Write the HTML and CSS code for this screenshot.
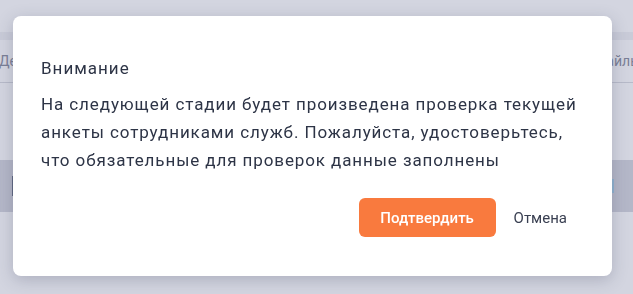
FILE: index.html
```html
<!DOCTYPE html>
<html lang="ru">
<head>
<meta charset="utf-8">
<link rel="stylesheet" href="styles.css">
</head>
<body>
<div class="page">
  <div class="band"></div>
  <div class="thead">
    <span class="th-left">Дело</span>
    <span class="th-right">Файлы</span>
  </div>
  <div class="spacer"></div>
  <div class="row-dark">
    <span class="mark-left"></span>
    <span class="mark-right"></span>
  </div>
</div>
<div class="modal" role="dialog">
  <div class="modal-title">Внимание</div>
  <p class="modal-text">На следующей стадии будет произведена проверка текущей анкеты сотрудниками служб. Пожалуйста, удостоверьтесь, что обязательные для проверок данные заполнены</p>
  <div class="modal-actions">
    <button class="btn btn-primary">Подтвердить</button>
    <button class="btn btn-link">Отмена</button>
  </div>
</div>
</body>
</html>
```
FILE: styles.css
```css
* { box-sizing: border-box; }
html, body { margin: 0; padding: 0; }
body {
  width: 633px;
  height: 294px;
  overflow: hidden;
  background: #d3d5e0;
  font-family: Roboto, "Liberation Sans", sans-serif;
  color: #2d3446;
}
.page {
  display: flex;
  flex-direction: column;
  padding-top: 32px;
}
.band {
  height: 8px;
  background: #c9cbd8;
}
.thead {
  height: 43px;
  display: flex;
  justify-content: space-between;
  align-items: center;
  border-bottom: 1px solid #b7bac9;
  font-size: 14px;
  color: #7a7f96;
  margin: 0 -8px 0 -1px;
}
.spacer { height: 77px; }
.row-dark {
  height: 52px;
  background: #b4b7c8;
  display: flex;
  justify-content: space-between;
  align-items: center;
}
.mark-left {
  width: 2px;
  height: 20px;
  margin-left: 12px;
  background: #5f6882;
}
.mark-right {
  width: 2px;
  height: 14px;
  margin-right: 19px;
  background: #8fb2d0;
}
.modal {
  position: fixed;
  left: 13px;
  top: 16px;
  width: 599px;
  height: 260px;
  background: #fff;
  border-radius: 8px;
  box-shadow: 0 4px 16px rgba(60, 64, 90, 0.25);
  padding: 42px 20px 0 28px;
  display: flex;
  flex-direction: column;
}
.modal-title {
  font-size: 17px;
  line-height: 20px;
  letter-spacing: 1px;
  color: #2d3446;
}
.modal-text {
  margin: 12px 0 0;
  font-size: 17px;
  line-height: 28px;
  letter-spacing: 0.9px;
  color: #2d3446;
}
.modal-actions {
  display: flex;
  justify-content: flex-end;
  align-items: center;
  gap: 18px;
  margin: 24px 25px 0 0;
}
.btn {
  font-family: inherit;
  font-size: 15px;
  border: none;
  cursor: pointer;
}
.btn-primary {
  background: #f97a3e;
  color: #fff;
  font-weight: 500;
  width: 137px;
  height: 39px;
  border-radius: 6px;
}
.btn-link {
  background: none;
  color: #3a4052;
  padding: 0;
}
```
